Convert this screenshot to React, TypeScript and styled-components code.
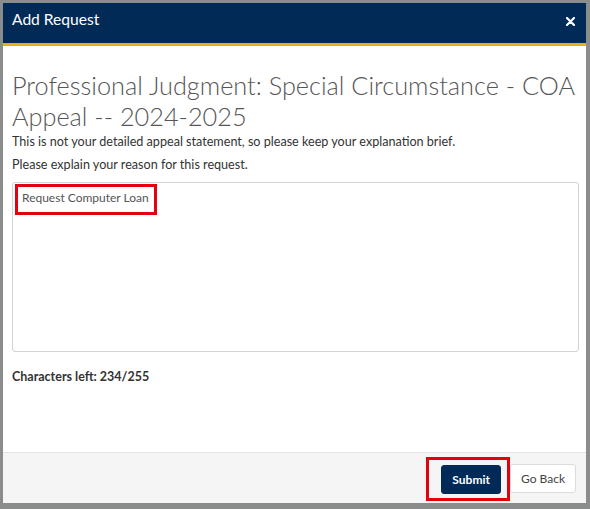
import React, { useState } from 'react';
import styled, { createGlobalStyle } from 'styled-components';

const GlobalStyle = createGlobalStyle`
  html, body {
    margin: 0;
    padding: 0;
    background: #8b8d8d;
    font-family: Lato, 'Open Sans', 'Liberation Sans', sans-serif;
  }
  * {
    box-sizing: border-box;
  }
`;

const Modal = styled.div`
  display: flex;
  flex-direction: column;
  margin: 3px 4px 6px 3px;
  height: 500px;
  background: #ffffff;
`;

const Header = styled.div`
  display: flex;
  justify-content: space-between;
  align-items: flex-start;
  height: 43px;
  padding: 7px 10px 0 9px;
  background: #012a57;
  border-bottom: 3px solid #e7b00f;
`;

const HeaderTitle = styled.h1`
  margin: 0;
  font-size: 15.6px;
  line-height: 19px;
  font-weight: 400;
  color: #ffffff;
`;

const CloseButton = styled.button`
  display: flex;
  align-items: center;
  justify-content: center;
  width: 12px;
  height: 12px;
  margin-top: 5px;
  padding: 0;
  border: none;
  background: transparent;
  cursor: pointer;
`;

const Body = styled.div`
  flex: 1;
  display: flex;
  flex-direction: column;
  padding: 24px 7px 0 9px;
`;

const Heading = styled.h2`
  margin: 0 0 -2px;
  font-size: 25.3px;
  line-height: 31px;
  font-weight: 300;
  color: #565656;
`;

const Note = styled.p`
  margin: 0;
  font-size: 12.6px;
  line-height: 23px;
  color: #333333;
`;

const FieldWrap = styled.div`
  position: relative;
  margin-top: 6px;
`;

const Explanation = styled.textarea`
  display: block;
  width: 100%;
  height: 170px;
  padding: 7px 9px;
  border: 1px solid #d3d3d3;
  border-radius: 3px;
  resize: none;
  font-family: inherit;
  font-size: 12px;
  line-height: 16px;
  color: #555555;
  background: #ffffff;
  outline: none;
`;

const Highlight = styled.div`
  position: absolute;
  left: 3px;
  top: 2px;
  width: 142px;
  height: 31px;
  border: 3px solid #e3000f;
  pointer-events: none;
`;

const Counter = styled.div`
  margin-top: 16px;
  font-size: 12.5px;
  line-height: 18px;
  font-weight: 700;
  color: #333333;
`;

const Footer = styled.div`
  display: flex;
  justify-content: flex-end;
  align-items: center;
  height: 51px;
  padding: 1px 10px 0 0;
  background: #f5f5f5;
  border-top: 1px solid #e3e3e3;
`;

const Marked = styled.span`
  display: flex;
  padding: 5px 6px 4px 12px;
  border: 3px solid #e3000f;
`;

type ButtonProps = {
  readonly $primary?: boolean;
};

const Button = styled.button<ButtonProps>`
  height: 29px;
  padding: 0 10px;
  border-radius: 3px;
  border: 1px solid ${(props) => (props.$primary ? '#012a57' : '#dcdcdc')};
  background: ${(props) => (props.$primary ? '#012a57' : '#ffffff')};
  color: ${(props) => (props.$primary ? '#ffffff' : '#444444')};
  font-family: inherit;
  font-size: 12px;
  font-weight: ${(props) => (props.$primary ? 700 : 400)};
  cursor: pointer;
`;

const MAX_CHARS = 255;

function App() {
  const [reason, setReason] = useState<string>('Request Computer Loan');
  const left = MAX_CHARS - reason.length;

  return (
    <>
      <GlobalStyle />
      <Modal>
        <Header>
          <HeaderTitle>Add Request</HeaderTitle>
          <CloseButton type="button" aria-label="Close">
            <svg width="9" height="9" viewBox="0 0 9 9">
              <path d="M1 1L8 8M8 1L1 8" stroke="#ffffff" strokeWidth="2.2" strokeLinecap="round" />
            </svg>
          </CloseButton>
        </Header>
        <Body>
          <Heading>Professional Judgment: Special Circumstance - COA Appeal -- 2024-2025</Heading>
          <Note>This is not your detailed appeal statement, so please keep your explanation brief.</Note>
          <Note>Please explain your reason for this request.</Note>
          <FieldWrap>
            <Explanation
              value={reason}
              maxLength={MAX_CHARS}
              onChange={(event) => setReason(event.target.value)}
            />
            <Highlight />
          </FieldWrap>
          <Counter>Characters left: {left}/{MAX_CHARS}</Counter>
        </Body>
        <Footer>
          <Marked>
            <Button type="button" $primary>Submit</Button>
          </Marked>
          <Button type="button">Go Back</Button>
        </Footer>
      </Modal>
    </>
  );
}

export default App;
